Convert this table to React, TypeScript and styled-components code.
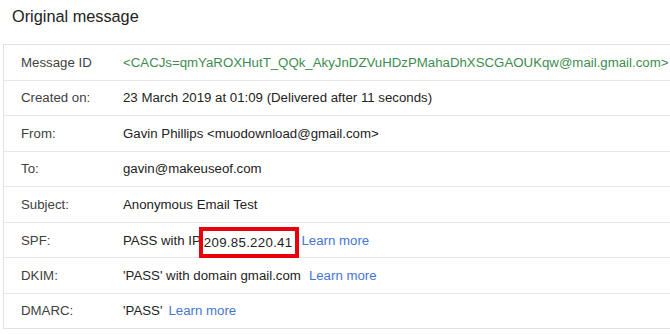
import React from "react";
import styled, { createGlobalStyle } from "styled-components";

const Global = createGlobalStyle`
  html, body { margin: 0; padding: 0; background: #ffffff; overflow: hidden; }
  body { font-family: "Liberation Sans", Arial, sans-serif; }
`;

const Page = styled.div`
  width: 670px;
  height: 334px;
  overflow: hidden;
  background: #fff;
  padding-top: 6px;
  box-sizing: border-box;
`;

const Heading = styled.h1`
  margin: 0 0 18px 12px;
  font-size: 16.3px;
  line-height: 20px;
  font-weight: normal;
  color: #222;
`;

const Table = styled.div`
  margin-left: 3px;
  width: 700px;
  border: 1px solid #e2e2e2;
  border-right: none;
  display: flex;
  flex-direction: column;
`;

const Row = styled.div`
  display: grid;
  grid-template-columns: 118px 1fr;
  align-items: center;
  height: 34.5px;
  border-bottom: 1px solid #e6e6e6;
  font-size: 13.25px;
  line-height: 15px;
  &:last-child { border-bottom: none; }
`;

const Label = styled.div`
  padding-left: 17px;
  color: #404040;
  white-space: nowrap;
`;

const Value = styled.div<{ $tone?: "green" }>`
  display: flex;
  align-items: center;
  padding-left: 1px;
  white-space: pre;
  color: ${(p) => (p.$tone === "green" ? "#3e8c50" : "#222")};
`;

const LearnMore = styled.a<{ $gap: number }>`
  color: #4575d4;
  text-decoration: none;
  margin-left: ${(p) => p.$gap}px;
  cursor: pointer;
`;

const Highlight = styled.span`
  display: inline-block;
  border: 4px solid #e8000b;
  margin-left: -2px;
  padding: 4px 3px 4px 1px;
  margin-top: 4px;
  letter-spacing: 0.3px;
  color: #222;
`;

const rows: { label: string; value: React.ReactNode; tone?: "green" }[] = [
  {
    label: "Message ID",
    tone: "green",
    value: "<CACJs=qmYaROXHutT_QQk_AkyJnDZVuHDzPMahaDhXSCGAOUKqw@mail.gmail.com>",
  },
  { label: "Created on:", value: "23 March 2019 at 01:09 (Delivered after 11 seconds)" },
  { label: "From:", value: "Gavin Phillips <muodownload@gmail.com>" },
  { label: "To:", value: "gavin@makeuseof.com" },
  { label: "Subject:", value: "Anonymous Email Test" },
  {
    label: "SPF:",
    value: (
      <>
        PASS with IP<Highlight>209.85.220.41</Highlight>
        <LearnMore $gap={2}>Learn more</LearnMore>
      </>
    ),
  },
  {
    label: "DKIM:",
    value: (
      <>
        'PASS' with domain gmail.com
        <LearnMore $gap={8}>Learn more</LearnMore>
      </>
    ),
  },
  {
    label: "DMARC:",
    value: (
      <>
        'PASS'
        <LearnMore $gap={6}>Learn more</LearnMore>
      </>
    ),
  },
];

export default function App() {
  return (
    <Page>
      <Global />
      <Heading>Original message</Heading>
      <Table>
        {rows.map((r) => (
          <Row key={r.label}>
            <Label>{r.label}</Label>
            <Value $tone={r.tone}>{r.value}</Value>
          </Row>
        ))}
      </Table>
    </Page>
  );
}
